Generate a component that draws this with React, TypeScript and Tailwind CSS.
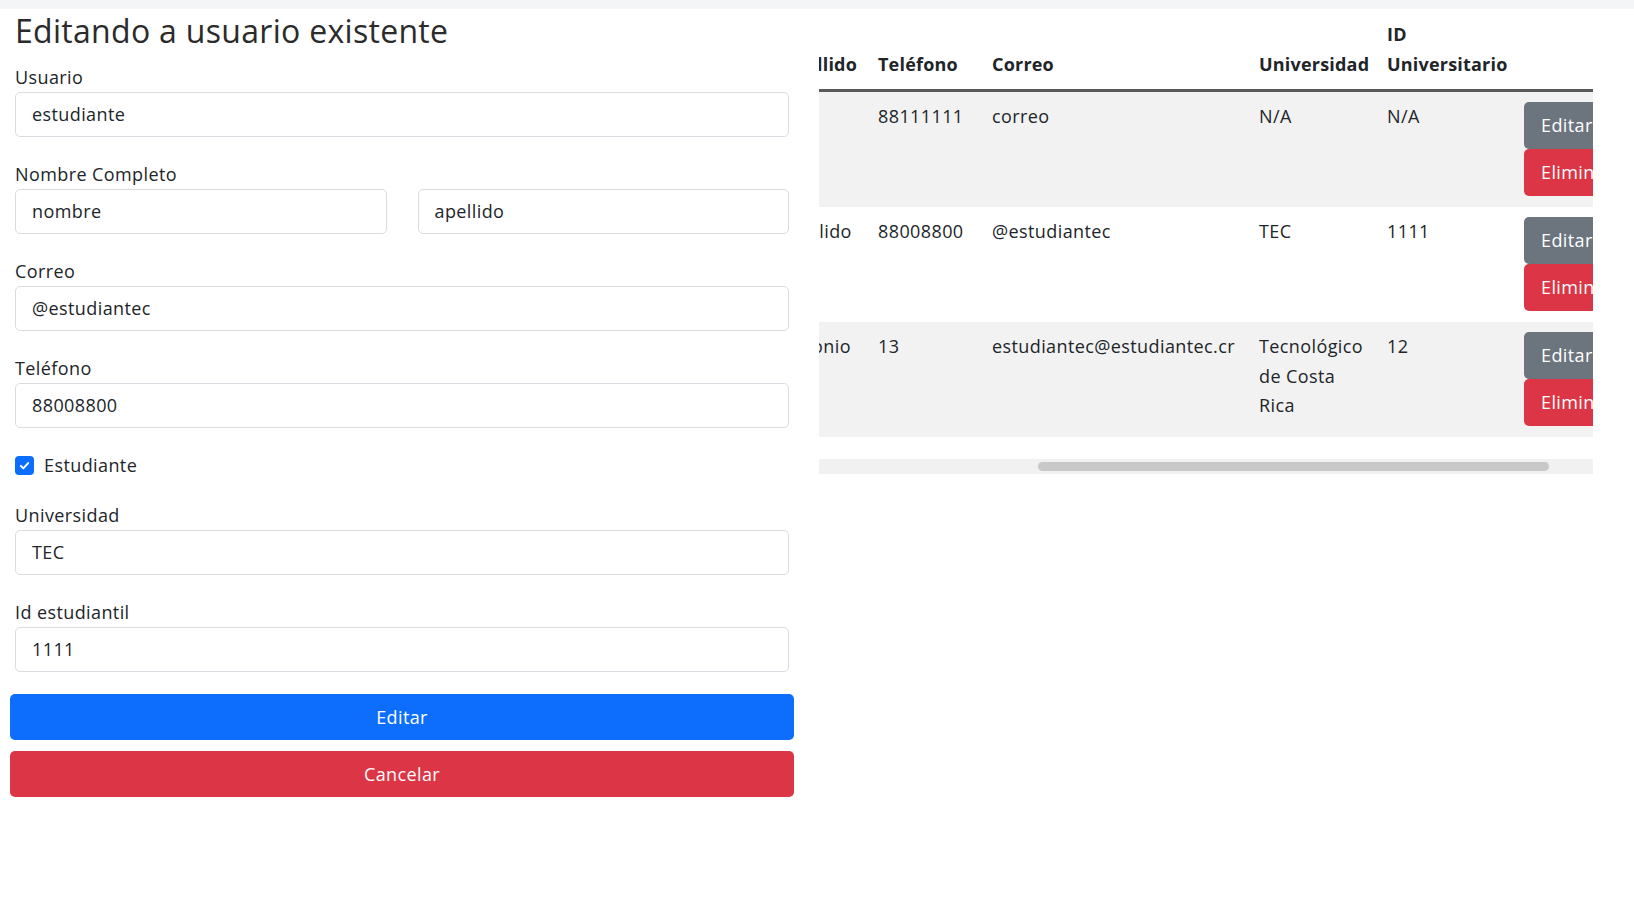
import { useLayoutEffect, useRef } from "react";

// ===== Types =====
interface Usuario {
  id: number;
  usuario: string;
  nombre: string;
  apellido: string;
  telefono: string;
  correo: string;
  universidad: string;
  idUniversitario: string;
}

// ===== Data =====
const usuarios: Usuario[] = [
  {
    id: 1,
    usuario: "admin",
    nombre: "admin",
    apellido: "",
    telefono: "88111111",
    correo: "correo",
    universidad: "N/A",
    idUniversitario: "N/A",
  },
  {
    id: 2,
    usuario: "estudiante",
    nombre: "nombre",
    apellido: "apellido",
    telefono: "88008800",
    correo: "@estudiantec",
    universidad: "TEC",
    idUniversitario: "1111",
  },
  {
    id: 3,
    usuario: "estudiantec",
    nombre: "Marco",
    apellido: "Antonio",
    telefono: "13",
    correo: "estudiantec@estudiantec.cr",
    universidad: "Tecnológico de Costa Rica",
    idUniversitario: "12",
  },
];

const columnas = [
  { titulo: "#", ancho: "w-[50px]" },
  { titulo: "Usuario", ancho: "w-[130px]" },
  { titulo: "Nombre", ancho: "w-[105px]" },
  { titulo: "Apellido", ancho: "w-[96px]" },
  { titulo: "Teléfono", ancho: "w-[114px]" },
  { titulo: "Correo", ancho: "w-[267px]" },
  { titulo: "Universidad", ancho: "w-[128px]" },
  { titulo: "ID Universitario", ancho: "w-[137px]" },
  { titulo: "", ancho: "w-[140px]" },
];

// ===== Components =====
function Campo({ label, value }: { label: string; value: string }) {
  return (
    <div className="mb-[24px]">
      <label className="block leading-[27px] mb-[1px]">{label}</label>
      <Entrada value={value} />
    </div>
  );
}

function Entrada({ value }: { value: string }) {
  return (
    <div className="h-[45px] flex items-center px-[16px] border border-[#d9dde1] rounded-[5px] bg-white">
      {value}
    </div>
  );
}

function Casilla() {
  return (
    <span className="w-[19px] h-[19px] rounded-[4px] bg-[#0d6efd] flex items-center justify-center">
      <svg viewBox="0 0 16 16" className="w-[13px] h-[13px]" fill="none" stroke="white" strokeWidth="2.4" strokeLinecap="round" strokeLinejoin="round">
        <path d="M3.5 8.5l3 3 6-6.5" />
      </svg>
    </span>
  );
}

function FormularioEdicion() {
  return (
    <div className="w-[784px] shrink-0">
      <h2 className="px-[5px] pt-[3px] text-[32px] leading-[38px] tracking-[0.3px] mb-[14px] text-[#2b2b2b]">
        Editando a usuario existente
      </h2>

      <div className="px-[5px]">
        <Campo label="Usuario" value="estudiante" />

        <div className="mb-[24px]">
          <label className="block leading-[27px] mb-[1px]">Nombre Completo</label>
          <div className="grid grid-cols-2 gap-[31px]">
            <Entrada value="nombre" />
            <Entrada value="apellido" />
          </div>
        </div>

        <Campo label="Correo" value="@estudiantec" />
        <Campo label="Teléfono" value="88008800" />

        <div className="flex items-center gap-[10px] h-[27px] mb-[23px]">
          <Casilla />
          <span>Estudiante</span>
        </div>

        <Campo label="Universidad" value="TEC" />
        <div className="mb-[22px]">
          <label className="block leading-[27px] mb-[1px]">Id estudiantil</label>
          <Entrada value="1111" />
        </div>
      </div>

      <div className="flex flex-col gap-[11px]">
        <button className="h-[46px] w-full rounded-[5px] bg-[#0d6efd] text-white tracking-[0.4px]">Editar</button>
        <button className="h-[46px] w-full rounded-[5px] bg-[#dc3545] text-white tracking-[0.4px]">Cancelar</button>
      </div>
    </div>
  );
}

function TablaUsuarios() {
  const scrollRef = useRef<HTMLDivElement>(null);

  // la tabla aparece desplazada hacia la derecha
  useLayoutEffect(() => {
    if (scrollRef.current) scrollRef.current.scrollLeft = 332;
  }, []);

  return (
    <div className="flex-1 min-w-0 pt-[1px]">
      <div ref={scrollRef} className="overflow-x-auto [scrollbar-width:none]">
        <table className="table-fixed w-[1167px] border-collapse leading-[29.5px] text-left">
          <colgroup>
            {columnas.map((c, i) => (
              <col key={i} className={c.ancho} />
            ))}
          </colgroup>
          <thead>
            <tr className="border-b-[3px] border-[#595959]">
              {columnas.map((c, i) => (
                <th key={i} className="align-bottom font-bold tracking-[0.2px] px-[10px] pt-[10px] pb-[10px]">
                  {c.titulo}
                </th>
              ))}
            </tr>
          </thead>
          <tbody>
            {usuarios.map((u, i) => (
              <tr key={u.id} className={i % 2 === 0 ? "bg-[#f2f2f2]" : "bg-white"}>
                <td className="align-top px-[10px] pt-[10px] pb-[11px]">{u.id}</td>
                <td className="align-top px-[10px] pt-[10px] pb-[11px]">{u.usuario}</td>
                <td className="align-top px-[10px] pt-[10px] pb-[11px]">{u.nombre}</td>
                <td className="align-top px-[10px] pt-[10px] pb-[11px]">{u.apellido}</td>
                <td className="align-top px-[10px] pt-[10px] pb-[11px]">{u.telefono}</td>
                <td className="align-top px-[10px] pt-[10px] pb-[11px]">{u.correo}</td>
                <td className="align-top px-[10px] pt-[10px] pb-[11px]">{u.universidad}</td>
                <td className="align-top px-[10px] pt-[10px] pb-[11px]">{u.idUniversitario}</td>
                <td className="align-top px-[10px] pt-[10px] pb-[11px]">
                  <div className="flex flex-col items-start">
                    <button className="h-[47px] px-[17px] rounded-[5px] bg-[#6c757d] text-white">Editar</button>
                    <button className="h-[47px] px-[17px] rounded-[5px] bg-[#dc3545] text-white">Eliminar</button>
                  </div>
                </td>
              </tr>
            ))}
          </tbody>
        </table>
      </div>

      {/* barra de desplazamiento */}
      <div className="mt-[22px] h-[15px] bg-[#f1f1f1] flex items-center">
        <div className="w-[219px] shrink-0" />
        <div className="w-[511px] h-[9px] rounded-full bg-[#c8c8c8]" />
      </div>
    </div>
  );
}

export default function App() {
  return (
    <div className="min-h-screen bg-white font-['Open_Sans',sans-serif] text-[18px] tracking-[0.4px] text-[#212529]">
      <div className="h-[9px] bg-[#f4f5f7]" />
      <div className="flex gap-[25px] pl-[10px] pr-[41px]">
        <FormularioEdicion />
        <TablaUsuarios />
      </div>
    </div>
  );
}
